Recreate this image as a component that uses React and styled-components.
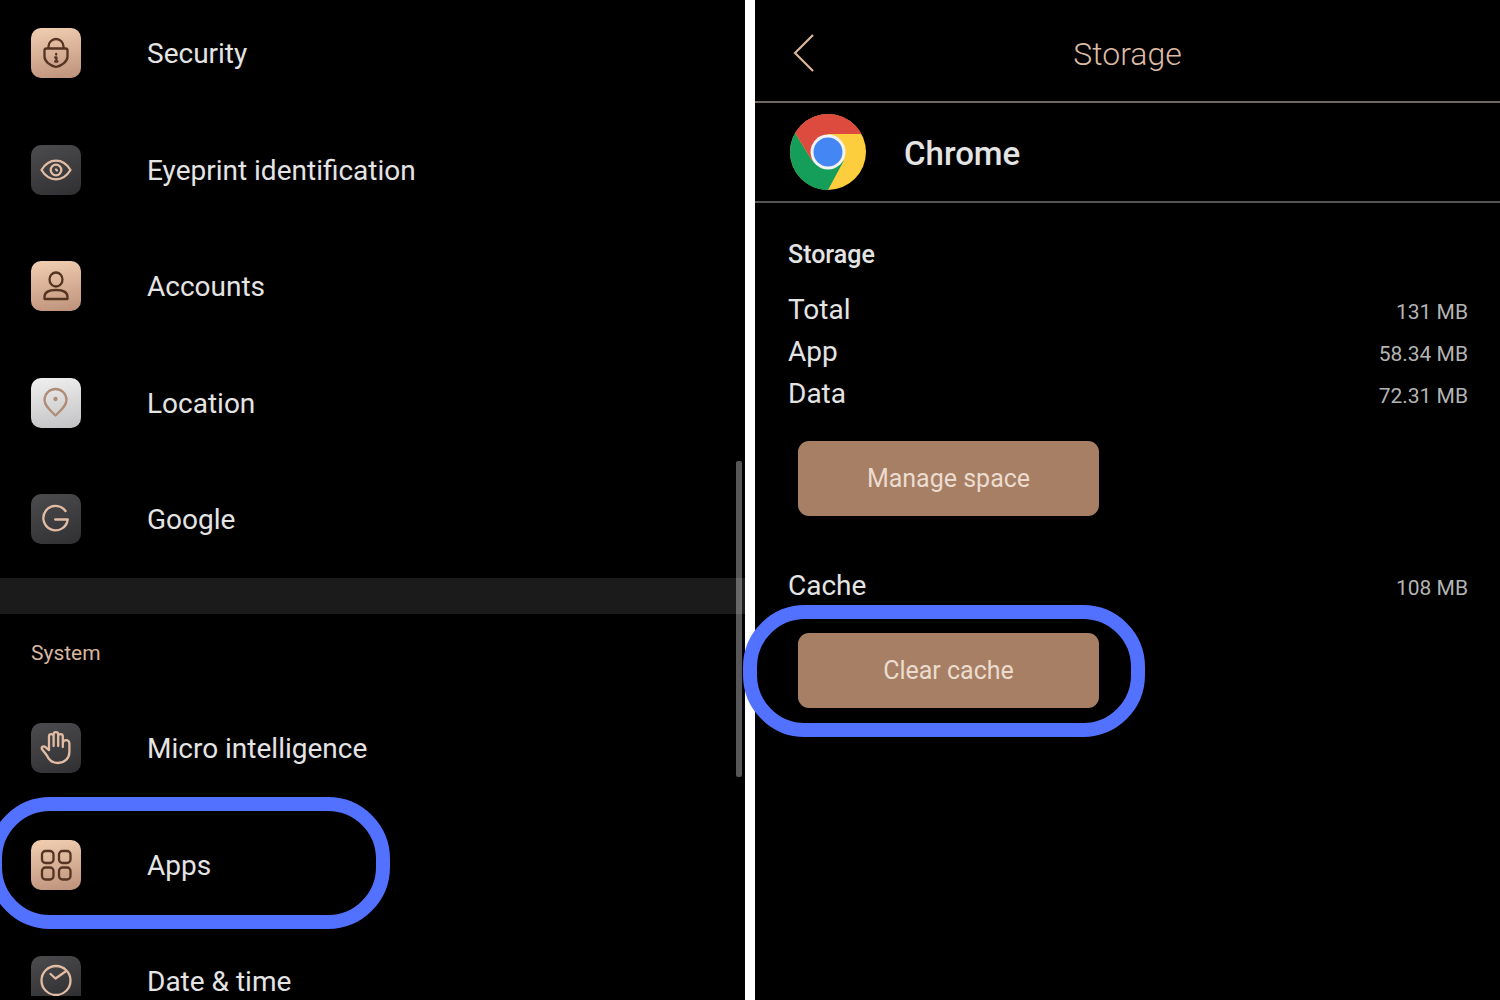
import React from 'react';
import styled, { createGlobalStyle } from 'styled-components';

const GlobalStyle = createGlobalStyle`
  *, *::before, *::after { box-sizing: border-box; }
  body { margin: 0; background: #000; font-family: Roboto, "Liberation Sans", sans-serif; color: #e4e4e4; }
  ul, dl, dd, h1, h2, h3 { margin: 0; padding: 0; list-style: none; }
`;

const Screens = styled.div`
  display: grid;
  grid-template-columns: minmax(0, 1fr) minmax(0, 1fr);
  column-gap: 10px;
  min-height: 100vh;
  background: #fff;
`;

const Panel = styled.main`
  position: relative;
  background: #000;
`;

const RowList = styled.ul`
  display: flex;
  flex-direction: column;
  justify-content: space-between;
  height: ${(p) => p.$height};
  margin: ${(p) => p.$margin || '0'};
`;

const RowItem = styled.li`
  position: relative;
`;

const RowLink = styled.a`
  display: flex;
  align-items: flex-start;
  gap: 66px;
  height: ${(p) => (p.$partial ? '40px' : '50px')};
  padding: 0 31px;
  font-size: 28px;
  line-height: 30px;
  color: inherit;
  text-decoration: none;
`;

const RowLabel = styled.span`
  padding-top: 11px;
`;

const tones = {
  copper: ['linear-gradient(170deg, #f2cfb2, #bd917a)', '#553423'],
  dark: ['linear-gradient(160deg, #4c4c4e, #303032)', '#e2bda4'],
  silver: ['linear-gradient(170deg, #f0f0f0, #c2c2c4)', '#b08b76'],
};

const Tile = styled.span`
  width: 50px;
  height: ${(p) => (p.$partial ? '40px' : '50px')};
  overflow: hidden;
  border-radius: ${(p) => (p.$partial ? '10px 10px 0 0' : '10px')};
  background: ${(p) => tones[p.$tone][0]};
  color: ${(p) => tones[p.$tone][1]};

  svg {
    display: block;
    fill: none;
    stroke: currentColor;
    stroke-width: 2.3;
    stroke-linecap: round;
    stroke-linejoin: round;
  }
`;

const Divider = styled.div`
  height: 36px;
  background: #1b1b1b;
`;

const GroupTitle = styled.h2`
  padding: 26px 31px 57px;
  font-size: 21px;
  line-height: 26px;
  font-weight: 400;
  color: #d9b79f;
`;

const ScrollThumb = styled.div`
  position: absolute;
  top: 461px;
  right: 3px;
  width: 6px;
  height: 316px;
  border-radius: 2px;
  background: rgba(255, 255, 255, 0.34);
`;

const Ring = styled.span`
  position: absolute;
  z-index: 2;
  border: 14px solid #5271ff;
  border-radius: 62px;
  pointer-events: none;
`;

const RowRing = styled(Ring)`
  top: -43px;
  left: -12px;
  width: 402px;
  height: 132px;
`;

const ButtonRing = styled(Ring)`
  inset: -28px -46px -29px -55px;
`;

const TopBar = styled.header`
  display: grid;
  grid-template-columns: 48px 1fr 48px;
  align-items: center;
  height: 103px;
  padding: 4px 26px 0;
  border-bottom: 2px solid #6f6862;
`;

const BackButton = styled.button`
  width: 48px;
  height: 48px;
  padding: 0;
  border: 0;
  background: none;
  color: #dcb698;

  svg { display: block; }
`;

const ScreenTitle = styled.h1`
  padding-top: 2px;
  font-size: 32px;
  line-height: 38px;
  font-weight: 300;
  text-align: center;
  color: #dcbba4;
`;

const AppHeader = styled.div`
  display: flex;
  align-items: center;
  gap: 38px;
  height: 100px;
  padding: 0 35px;
  border-bottom: 2px solid #555;
`;

const AppName = styled.h2`
  padding-top: 4px;
  font-size: 33px;
  line-height: 38px;
  font-weight: 500;
`;

const Details = styled.div`
  padding: 37px 32px 0 33px;
`;

const SectionTitle = styled.h3`
  margin-bottom: 19px;
  font-size: 25px;
  line-height: 30px;
  font-weight: 500;
`;

const Usage = styled.dl`
  margin-bottom: 26px;
`;

const UsageRow = styled.div`
  display: flex;
  align-items: baseline;
  justify-content: space-between;
  height: 42px;
  line-height: 42px;

  dt { font-size: 28px; }
  dd { font-size: 21px; color: #b4b4b4; }
`;

const ActionSlot = styled.div`
  position: relative;
  width: 301px;
  margin: 0 0 49px 10px;
`;

const Action = styled.button`
  display: block;
  width: 100%;
  height: 75px;
  border: 0;
  border-radius: 11px;
  background: #a67f64;
  color: #ecdccf;
  font: 400 25px/30px Roboto, "Liberation Sans", sans-serif;
`;

const icons = {
  lock: (
    <>
      <path d="M17.5 20v-1.500a7.500 7.500 0 0 1 15 0v1.500M15.500 20.500h19q2 0 2 2v6c0 5-5.500 9-11.500 10.500c-6-1.500-11.500-5.500-11.500-10.500v-6q0-2 2-2z" />
      <path d="M25.200 26v.5M24.200 29.500h1.200v4M24.200 33.500h2.200" />
    </>
  ),
  eye: (
    <>
      <path d="M10.500 25c4-6.500 9-9.300 14.500-9.300s10.500 2.800 14.500 9.300c-4 6.500-9 9.300-14.500 9.300s-10.500-2.800-14.500-9.300z" />
      <circle cx="25" cy="25" r="5.300" />
      <path d="M25 24.500l1 1" />
    </>
  ),
  person: (
    <>
      <ellipse cx="25" cy="18.500" rx="6.500" ry="7" />
      <path d="M13.500 38v-2c0-4.500 4.500-7 11.500-7s11.500 2.500 11.500 7v2z" />
    </>
  ),
  pin: (
    <>
      <path d="M24.500 37.500c-5-5-11-9.500-11-15.500a11 11 0 0 1 22 0c0 6-6 10.500-11 15.500z" />
      <circle cx="24.500" cy="21" r="1" />
    </>
  ),
  google: <path d="M34.500 17a12.200 12.200 0 1 0 2.200 8.500h-12.500" />,
  hand: (
    <path d="M18 27V13.500a2.300 2.300 0 0 1 4.600 0V23V11.500a2.300 2.300 0 0 1 4.600 0V23V13.500a2.300 2.300 0 0 1 4.600 0V24V20.500a3.300 3.300 0 0 1 6.600 0V29c0 6.500-5 11-11.500 11c-5.500 0-9-3-11-7.500l-5-6.500c-1-2.500 2-3.500 4-1.500z" />
  ),
  grid: (
    <>
      <rect x="11" y="11" width="11.500" height="12" rx="3.500" />
      <rect x="28" y="11" width="11.500" height="12" rx="3.500" />
      <rect x="11" y="27.500" width="11.500" height="12" rx="3.500" />
      <rect x="28" y="27.500" width="11.500" height="12" rx="3.500" />
    </>
  ),
  clock: (
    <>
      <circle cx="25" cy="24.500" r="14.500" />
      <path d="M19.500 18l5 4.500l10-7" />
    </>
  ),
};

function Row({ icon, tone, label, ringed, partial }) {
  return (
    <RowItem>
      <RowLink href="#" $partial={partial}>
        <Tile $tone={tone} $partial={partial}>
          <svg width="50" height="50" viewBox="0 0 50 50" aria-hidden="true">{icons[icon]}</svg>
        </Tile>
        <RowLabel>{label}</RowLabel>
      </RowLink>
      {ringed && <RowRing />}
    </RowItem>
  );
}

function ChromeLogo() {
  return (
    <svg width="76" height="76" viewBox="0 0 76 76" aria-hidden="true">
      <circle cx="38" cy="38" r="38" fill="#fccd3d" />
      <path d="M38 38L22.400 47L5.100 19A38 38 0 0 0 38 76L53.600 47z" fill="#149e5a" />
      <path d="M38 38V20H71.500A38 38 0 0 0 5.100 19L22.400 47z" fill="#dd4b3e" />
      <circle cx="38" cy="38" r="17.500" fill="#f3f3f3" />
      <circle cx="38" cy="38" r="14.500" fill="#4486f4" />
    </svg>
  );
}

function UsageEntry({ name, value }) {
  return (
    <UsageRow>
      <dt>{name}</dt>
      <dd>{value}</dd>
    </UsageRow>
  );
}

export default function App() {
  return (
    <>
      <GlobalStyle />
      <Screens>
        <Panel as="nav">
          <RowList $height="516px" $margin="28px 0 34px">
            <Row icon="lock" tone="copper" label="Security" />
            <Row icon="eye" tone="dark" label="Eyeprint identification" />
            <Row icon="person" tone="copper" label="Accounts" />
            <Row icon="pin" tone="silver" label="Location" />
            <Row icon="google" tone="dark" label="Google" />
          </RowList>
          <Divider />
          <section>
            <GroupTitle>System</GroupTitle>
            <RowList $height="273px">
              <Row icon="hand" tone="dark" label="Micro intelligence" />
              <Row icon="grid" tone="copper" label="Apps" ringed />
              <Row icon="clock" tone="dark" label="Date &amp; time" partial />
            </RowList>
          </section>
          <ScrollThumb />
        </Panel>
        <Panel>
          <TopBar>
            <BackButton aria-label="Back">
              <svg width="48" height="48" viewBox="0 0 48 48" fill="none" stroke="currentColor" strokeWidth="2.200">
                <path d="M32 6L14 24L32 42" />
              </svg>
            </BackButton>
            <ScreenTitle>Storage</ScreenTitle>
          </TopBar>
          <AppHeader>
            <ChromeLogo />
            <AppName>Chrome</AppName>
          </AppHeader>
          <Details>
            <SectionTitle>Storage</SectionTitle>
            <Usage>
              <UsageEntry name="Total" value="131 MB" />
              <UsageEntry name="App" value="58.34 MB" />
              <UsageEntry name="Data" value="72.31 MB" />
            </Usage>
            <ActionSlot>
              <Action>Manage space</Action>
            </ActionSlot>
            <Usage>
              <UsageEntry name="Cache" value="108 MB" />
            </Usage>
            <ActionSlot>
              <Action>Clear cache</Action>
              <ButtonRing />
            </ActionSlot>
          </Details>
        </Panel>
      </Screens>
    </>
  );
}
